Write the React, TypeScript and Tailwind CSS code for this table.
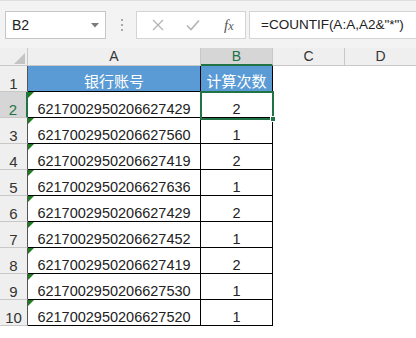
import React from "react";

const rows: { acct: string; n: number }[] = [
  { acct: "6217002950206627429", n: 2 },
  { acct: "6217002950206627560", n: 1 },
  { acct: "6217002950206627419", n: 2 },
  { acct: "6217002950206627636", n: 1 },
  { acct: "6217002950206627429", n: 2 },
  { acct: "6217002950206627452", n: 1 },
  { acct: "6217002950206627419", n: 2 },
  { acct: "6217002950206627530", n: 1 },
  { acct: "6217002950206627520", n: 1 },
];

const sans = { fontFamily: '"Liberation Sans", Arial, sans-serif' };
const cjk = { fontFamily: '"Noto Sans CJK SC", "Noto Sans", sans-serif' };

function Toolbar() {
  return (
    <div className="flex h-[48px] items-start border-t border-[#dedede] bg-[#f3f3f3] pt-[10px]">
      {/* name box */}
      <div className="ml-[5px] flex h-[28px] w-[101px] items-center justify-between border border-[#c6c6c6] bg-white pl-[6px] pr-[6px]">
        <span className="text-[14px] text-[#222]" style={sans}>B2</span>
        <svg width="8" height="5" viewBox="0 0 8 5"><path d="M0 0h8L4 4.5z" fill="#7a7a7a" /></svg>
      </div>
      {/* separator dots */}
      <div className="ml-[15px] mt-[8px] flex w-[3px] flex-col gap-[3px]">
        <div className="h-[2px] w-[2px] bg-[#a8a8a8]" />
        <div className="h-[2px] w-[2px] bg-[#a8a8a8]" />
        <div className="h-[2px] w-[2px] bg-[#a8a8a8]" />
      </div>
      {/* cancel / enter / fx */}
      <div className="ml-[12px] flex h-[28px] w-[110px] items-center border border-[#d4d4d4] bg-white">
        <svg className="ml-[15px]" width="12" height="12" viewBox="0 0 12 12">
          <path d="M1 1l10 10M11 1L1 11" stroke="#b4b4b4" strokeWidth="1.3" />
        </svg>
        <svg className="ml-[22px]" width="14" height="12" viewBox="0 0 14 12">
          <path d="M1 6.5l4 4L13 1.5" stroke="#b4b4b4" strokeWidth="1.6" fill="none" />
        </svg>
        <span
          className="ml-[24px] text-[15px] italic text-[#555]"
          style={{ fontFamily: '"Liberation Serif", "Times New Roman", serif' }}
        >
          f<span className="text-[12px]">x</span>
        </span>
      </div>
      {/* formula bar */}
      <div className="ml-[3px] flex h-[28px] flex-1 items-center border border-r-0 border-[#d4d4d4] bg-white pl-[11px]">
        <span className="text-[13.5px] text-[#222]" style={sans}>=COUNTIF(A:A,A2&amp;"*")</span>
      </div>
    </div>
  );
}

function ErrorMark() {
  return (
    <svg className="absolute left-0 top-0" width="6" height="6" viewBox="0 0 6 6">
      <path d="M0 0h6L0 6z" fill="#1e7a1e" />
    </svg>
  );
}

export default function App() {
  return (
    <div className="h-[338px] w-[416px] overflow-hidden bg-white" style={sans}>
      <Toolbar />
      <div className="relative grid grid-cols-[28px_173px_72px_72px_1fr]">
        {/* column headers */}
        <div className="relative h-[18px] border-b border-r border-[#c8c8c8] bg-[#efefef]">
          <svg className="absolute bottom-[1px] right-[2px]" width="11" height="11" viewBox="0 0 11 11">
            <path d="M11 0v11H0z" fill="#c4c4c4" />
          </svg>
        </div>
        <div className="flex h-[18px] items-end justify-center border-b border-r border-[#c8c8c8] bg-[#efefef] text-[14px] leading-[17px] text-[#333]">A</div>
        <div className="flex h-[18px] items-end justify-center border-b-2 border-r border-b-[#217346] border-r-[#c8c8c8] bg-[#d6d6d6] text-[14px] leading-[16px] text-[#217346]">B</div>
        <div className="flex h-[18px] items-end justify-center border-b border-r border-[#c8c8c8] bg-[#efefef] text-[14px] leading-[17px] text-[#333]">C</div>
        <div className="flex h-[18px] items-end justify-center border-b border-[#c8c8c8] bg-[#efefef] text-[14px] leading-[17px] text-[#333]">D</div>

        {/* row 1: table heading */}
        <div className="flex h-[26px] items-end justify-center border-b border-r border-b-[#c8c8c8] border-r-[#555] bg-[#efefef] text-[15px] leading-[14px] text-[#333]">1</div>
        <div className="flex h-[26px] items-center justify-center border-b border-r border-black bg-[#5b9bd5] pt-[5px] text-[15px] text-white" style={cjk}>银行账号</div>
        <div className="flex h-[26px] items-center justify-center border-b border-r border-black bg-[#5b9bd5] pt-[5px] text-[15px] text-white" style={cjk}>计算次数</div>
        <div className="h-[26px]" />
        <div className="h-[26px]" />

        {rows.map((r, i) => {
          const num = i + 2;
          const selected = num === 2;
          return (
            <React.Fragment key={num}>
              <div
                className={
                  selected
                    ? "flex h-[26px] items-end justify-center border-b border-r-2 border-b-[#c8c8c8] border-r-[#217346] bg-[#d6d6d6] text-[15px] leading-[14px] text-[#217346]"
                    : "flex h-[26px] items-end justify-center border-b border-r border-b-[#c8c8c8] border-r-[#555] bg-[#efefef] text-[15px] leading-[14px] text-[#333]"
                }
              >
                {num}
              </div>
              <div className="relative flex h-[26px] items-end justify-center border-b border-r border-black text-[14.5px] leading-[16px] text-[#222]">
                <ErrorMark />
                {r.acct}
              </div>
              <div className="flex h-[26px] items-end justify-center border-b border-r border-black text-[14.5px] leading-[16px] text-[#222]">
                {r.n}
              </div>
              <div className="h-[26px]" />
              <div className="h-[26px]" />
            </React.Fragment>
          );
        })}

        {/* active cell outline with fill handle */}
        <div className="pointer-events-none absolute left-[200px] top-[43px] h-[29px] w-[74px] border-2 border-[#217346]">
          <div className="absolute -bottom-[4px] -right-[4px] h-[6px] w-[6px] border border-white bg-[#217346]" />
        </div>
      </div>
    </div>
  );
}
